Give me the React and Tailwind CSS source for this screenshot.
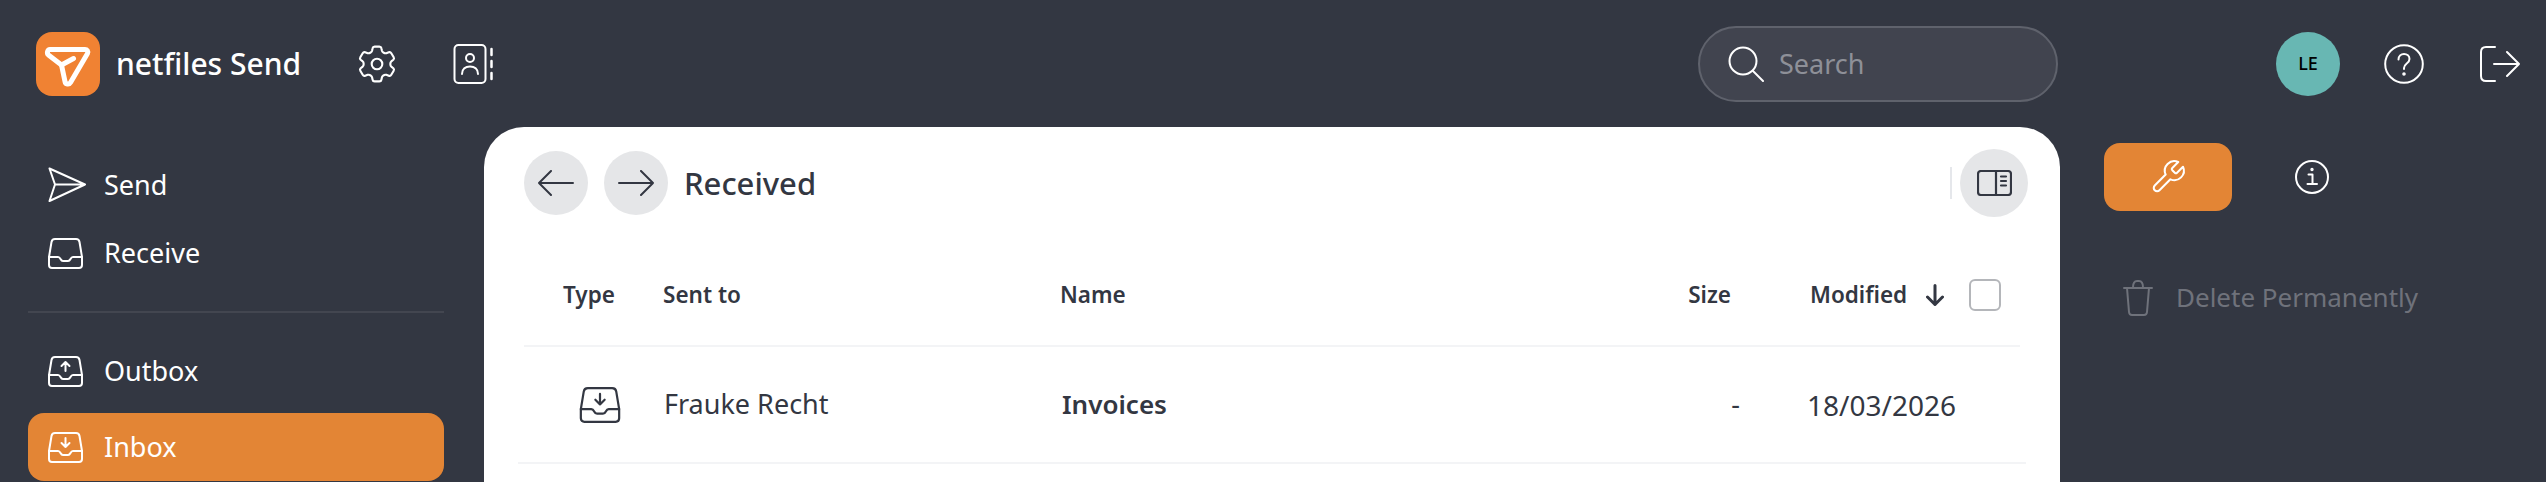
import React from 'react';

const Ic = ({ className = '', vb = '0 0 24 24', sw = 2, children }) => (
  <svg viewBox={vb} fill="none" stroke="currentColor" strokeWidth={sw} strokeLinecap="round" strokeLinejoin="round" className={`shrink-0 ${className}`}>
    {children}
  </svg>
);

const TrayIcon = ({ className, mark, sw = 2 }) => (
  <Ic className={className} vb="0 0 35 31" sw={sw}>
    <path d="M1 19 3.500 4C3.800 2 5 1 7 1H28C30 1 31.200 2 31.500 4L34 19V27C34 29 32.500 30 31 30H4C2.500 30 1 29 1 27Z" />
    <path d="M1 19H10C11.500 19 12 20 12.500 21 13 22 14 23 15 23H20C21 23 22 22 22.500 21 23 20 23.500 19 25 19H34" />
    {mark === 'up' && <path d="M17.500 15V6M13.500 10 17.500 6 21.500 10" />}
    {mark === 'down' && <path d="M17.500 6V15M13.500 11 17.500 15 21.500 11" />}
  </Ic>
);

const NavItem = ({ label, icon, active }) => (
  <div className={`flex items-center h-[68px] rounded-[16px] pl-[20px] text-[27px] text-white ${active ? 'bg-[#e38535]' : ''}`}>
    <span className="w-[56px] shrink-0 flex">{icon}</span>
    <span>{label}</span>
  </div>
);

const colGrid = 'grid grid-cols-[139px_397px_560px_111px_1fr] items-center';

export default function App() {
  return (
    <div className="w-[2546px] h-[482px] overflow-hidden bg-[#333742] flex flex-col font-['Noto_Sans','Open_Sans',sans-serif]">
      {/* top bar */}
      <header className="h-[127px] shrink-0 flex items-center pl-[36px]">
        <div className="w-[64px] h-[64px] rounded-[16px] bg-[#f08233] shrink-0">
          <svg viewBox="0 0 64 64" fill="none" stroke="white" strokeWidth="5" strokeLinecap="round" strokeLinejoin="round" className="w-[64px] h-[64px]">
            <path d="M14 17.500H49C51 17.500 52.500 19.500 51.500 21.500L34.500 50.500C33 53 29.500 52.500 29 49.500L25.500 33 12.500 23C10.500 21.200 11.500 17.500 14 17.500Z" />
            <path d="M25.500 33 37.500 26.500" />
          </svg>
        </div>
        <span className="ml-[16px] w-[187px] text-[30px] font-medium text-white whitespace-nowrap">netfiles Send</span>
        <Ic className="ml-[52px] w-[44px] h-[44px] text-white" sw={1.15}>
          <path d="M9.600 3.400c.1-.6.6-.9 1.100-.9h2.600c.5 0 1 .3 1.100 .9l.3 1.400c.1.4.4.7.7.9l.6.3c.3.2.7.2 1.100.1l1.300-.5c.5-.2 1.100 0 1.400.5l1.300 2.200c.3.5.2 1-.2 1.400l-1.100.9c-.3.3-.5.6-.5 1v.8c0 .4.2.8.5 1l1.100.9c.4.4.5.9.2 1.400l-1.300 2.200c-.3.5-.9.7-1.400.5l-1.300-.5c-.4-.1-.8-.1-1.100.1l-.6.3c-.3.2-.6.5-.7.9l-.3 1.400c-.1.6-.6.9-1.100.9h-2.600c-.5 0-1-.3-1.100-.9l-.3-1.400c-.1-.4-.4-.7-.7-.9l-.6-.3c-.3-.2-.7-.2-1.100-.1l-1.300.5c-.5.2-1.100 0-1.400-.5l-1.300-2.200c-.3-.5-.2-1 .2-1.400l1.100-.9c.3-.3.5-.6.5-1v-.8c0-.4-.2-.8-.5-1l-1.100-.9c-.4-.4-.5-.9-.2-1.400l1.300-2.200c.3-.5.9-.7 1.400-.5l1.300.5c.4.1.8.1 1.100-.1l.6-.3c.3-.2.6-.5.7-.9l.3-1.400Z" />
          <circle cx="12" cy="12" r="2.900" />
        </Ic>
        <Ic className="ml-[54px] w-[40px] h-[40px] text-white" vb="0 0 40 40" sw={2}>
          <rect x="1.500" y="1" width="31" height="38" rx="4" />
          <circle cx="17" cy="14" r="4" />
          <path d="M9 30C9 25 12.500 22.500 17 22.500S25 25 25 30" />
          <path d="M38.500 5V11M38.500 17V23M38.500 29V35" strokeWidth="2.500" />
        </Ic>
        <div className="ml-[1205px] w-[360px] h-[76px] shrink-0 rounded-full bg-[#41444f] border-2 border-[#5f626c] flex items-center pl-[28px]">
          <Ic className="w-[36px] h-[36px] text-white" vb="0 0 36 36" sw={2}>
            <circle cx="15" cy="15" r="13.500" />
            <path d="M25 25 35 35" />
          </Ic>
          <span className="ml-[15px] text-[27px] text-[#8e9098] relative top-[1px]">Search</span>
        </div>
        <div className="ml-[218px] w-[64px] h-[64px] shrink-0 rounded-full bg-[#68b7b3] flex items-center justify-center text-[18px] font-medium text-black">LE</div>
        <Ic className="ml-[44px] w-[40px] h-[40px] text-white" vb="0 0 40 40" sw={2}>
          <circle cx="20" cy="20" r="18.800" />
          <path d="M14.500 15.500C14.500 12.200 17 10 20 10S25.500 12 25.500 15C25.500 17.500 24 18.700 22.500 19.800 21 21 20 22 20 24V25" />
          <circle cx="20" cy="30" r=".8" fill="currentColor" />
        </Ic>
        <Ic className="ml-[56px] w-[40px] h-[36px] text-white" vb="0 0 40 36" sw={2}>
          <path d="M15 1H6C3 1 1 3 1 6V30C1 33 3 35 6 35H15" />
          <path d="M14 18H39M27 6 39 18 27 30" />
        </Ic>
      </header>

      <div className="flex flex-1 min-h-0">
        {/* left nav */}
        <aside className="w-[484px] shrink-0 pl-[28px] pr-[40px] pt-[24px]">
          <nav className="flex flex-col">
            <NavItem label="Send" icon={
              <Ic className="w-[38px] h-[36px]" vb="0 0 38 36" sw={2}>
                <path d="M1.500 1.500 37 17.500 1.500 34 7 17.500ZM7 17.500H37" />
              </Ic>
            } />
            <NavItem label="Receive" icon={<TrayIcon className="w-[35px] h-[31px]" />} />
          </nav>
          <div className="mt-[24px] mb-[24px] h-[2px] bg-[#434650]" />
          <nav className="flex flex-col gap-2">
            <NavItem label="Outbox" icon={<TrayIcon className="w-[35px] h-[31px]" mark="up" />} />
            <NavItem label="Inbox" active icon={<TrayIcon className="w-[35px] h-[31px]" mark="down" />} />
          </nav>
        </aside>

        {/* file list */}
        <main className="w-[1576px] shrink-0 bg-white rounded-t-[40px] pl-[40px] pr-[40px] text-[#333742]">
          <div className="h-[112px] flex items-center -mr-[8px]">
            <button className="w-[64px] h-[64px] rounded-full bg-[#e5e6e8] flex items-center justify-center">
              <Ic className="w-[36px] h-[26px]" vb="0 0 36 26" sw={2}>
                <path d="M35 13H1M13 1 1 13 13 25" />
              </Ic>
            </button>
            <button className="ml-[16px] w-[64px] h-[64px] rounded-full bg-[#e5e6e8] flex items-center justify-center">
              <Ic className="w-[36px] h-[26px]" vb="0 0 36 26" sw={2}>
                <path d="M1 13H35M23 1 35 13 23 25" />
              </Ic>
            </button>
            <span className="ml-[16px] text-[31px] font-medium">Received</span>
            <div className="ml-auto w-[2px] h-[32px] bg-[#e5e7eb]" />
            <button className="ml-[8px] w-[68px] h-[68px] rounded-full bg-[#e5e6e8] flex items-center justify-center">
              <Ic className="w-[35px] h-[26px]" vb="0 0 35 26" sw={2.2}>
                <rect x="1" y="1" width="33" height="24" rx="3" />
                <path d="M19 1V25M24 6.500H29M24 11H29M24 15.500H29" />
              </Ic>
            </button>
          </div>

          <div className={`${colGrid} mt-[6px] h-[102px] border-b-2 border-[#f3f4f6] text-[22.500px] font-semibold`}>
            <span className="pl-[39px]">Type</span>
            <span>Sent to</span>
            <span>Name</span>
            <span className="text-right">Size</span>
            <div className="flex items-center pl-[79px]">
              <span>Modified</span>
              <Ic className="ml-[19px] w-[18px] h-[22px]" vb="0 0 18 22" sw={3}>
                <path d="M9 1.500V20.500M1.500 13 9 20.500 16.500 13" />
              </Ic>
              <span className="ml-[25px] w-[32px] h-[32px] rounded-[6px] border-2 border-[#b4b6ba] bg-white shrink-0" />
            </div>
          </div>

          <div className={`${colGrid} -mx-[6px] pl-[6px] h-[117px] border-b-2 border-[#f3f4f6] text-[27px]`}>
            <span className="pl-[55px] flex"><TrayIcon className="w-[42px] h-[36px]" mark="down" sw={1.9} /></span>
            <span className="pl-[1px]">Frauke Recht</span>
            <span className="pl-[2px] text-[26px] font-semibold">Invoices</span>
            <span className="text-right -mr-[9px]">-</span>
            <span className="pl-[76px] text-[28px]">18/03/2026</span>
          </div>
        </main>

        {/* right actions */}
        <aside className="flex-1 pl-[44px] pt-[16px]">
          <div className="flex items-center">
            <button className="w-[128px] h-[68px] rounded-[16px] bg-[#e38535] flex items-center justify-center text-white">
              <Ic className="w-[38px] h-[38px]" sw={1.3}>
                <path d="M14.700 6.300a1 1 0 0 0 0 1.400l1.600 1.600a1 1 0 0 0 1.400 0l3.770-3.770a6 6 0 0 1-7.940 7.940l-6.910 6.910a2.120 2.120 0 0 1-3-3l6.910-6.910a6 6 0 0 1 7.940-7.940l-3.760 3.760z" />
              </Ic>
            </button>
            <Ic className="ml-[63px] w-[34px] h-[34px] text-white" vb="0 0 34 34" sw={2}>
              <circle cx="17" cy="17" r="16" />
              <path d="M13.500 14.500H17.500V24M12.500 24H22" />
              <circle cx="17" cy="9.500" r=".7" fill="currentColor" />
            </Ic>
          </div>
          <div className="mt-[67px] ml-[19px] flex items-center text-[#6f727b]">
            <Ic className="w-[30px] h-[36px]" vb="0 0 30 36" sw={2}>
              <path d="M1 8H29M4 8 6 32C6.200 34 7.500 35 9 35H21C22.500 35 23.800 34 24 32L26 8M10 7.500C10 3 11.500 1 14 1H16C18.500 1 20 3 20 7.500" />
            </Ic>
            <span className="ml-[23px] text-[26px] whitespace-nowrap">Delete Permanently</span>
          </div>
        </aside>
      </div>
    </div>
  );
}
